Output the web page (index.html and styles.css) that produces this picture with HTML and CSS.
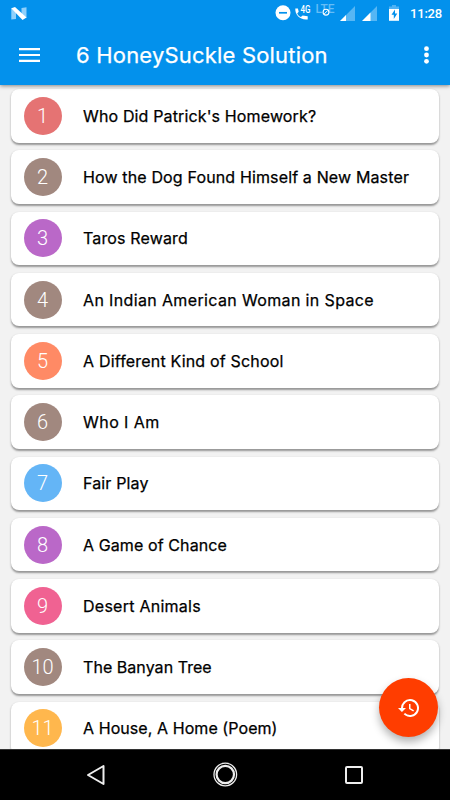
FILE: index.html
```html
<!DOCTYPE html>
<html lang="en">
<head>
  <meta charset="utf-8">
  <meta name="viewport" content="width=device-width">
  <title>6 HoneySuckle Solution</title>
  <link rel="stylesheet" href="styles.css">
</head>
<body>
  <header class="top">
    <div class="status">
      <svg class="logo" width="16" height="13" viewBox="0 0 16 13">
        <path d="M0.3 1L5 4.5V12L0.3 12.6zM10.5 1L15.5 0.3V11L10.5 8z" fill="#8fd0fb"/>
        <path d="M0.3 1.2L4 0L15.5 10.5L11.5 13z" fill="#fff"/>
      </svg>
      <svg class="icons" width="130" height="20" viewBox="275 3 130 20">
        <circle cx="283" cy="12.8" r="7.5" fill="#fff"/>
        <path d="M279 12.8h8" stroke="#0391ec" stroke-width="1.7"/>
        <path d="M295.3 8.5h2.6l.8 3.2-1.5 1.7c.9 1.7 2.1 2.8 3.7 3.6l1.7-1.6 5.1.8v3.2c-7.7.9-12.7-4.5-12.4-10.9z" fill="#fff"/>
        <text class="net" x="300.5" y="13" textLength="10" lengthAdjust="spacingAndGlyphs">4G</text>
        <text class="lte" x="315.5" y="13" textLength="19" lengthAdjust="spacingAndGlyphs">LTE</text>
        <circle cx="326" cy="12.2" r="2.9" fill="#0391ec" stroke="#fff" stroke-width="1.1"/>
        <path d="M324.2 14l3.6-3.6" stroke="#fff"/>
        <path d="M340 21L355 6V21zM362 21L377 6V21z" fill="#56b6f4"/>
        <path d="M340 21L346 15V21zM362 21L370.5 12.5V21z" fill="#fff"/>
        <path d="M389 6.5h3V5h4v1.5h3V9h-10z" fill="#4fb2f4"/>
        <path d="M389 9h10v11.8h-10z" fill="#fff"/>
        <path d="M395 9.5l-3.5 5.2h2.3v4.3l3.5-5.5h-2.3z" fill="#0391ec"/>
      </svg>
      <span class="time">11:28</span>
    </div>
    <div class="bar">
      <svg class="menu" width="21" height="14" viewBox="0 0 21 14">
        <path d="M0 1.1h21M0 7h21M0 12.9h21" stroke="#fff" stroke-width="2.1"/>
      </svg>
      <h1>6 HoneySuckle Solution</h1>
      <svg class="more" width="6" height="18" viewBox="0 0 6 18">
        <g fill="#fff"><circle cx="3.5" cy="2.7" r="2.4"/><circle cx="3.5" cy="9" r="2.4"/><circle cx="3.5" cy="15.3" r="2.4"/></g>
      </svg>
    </div>
  </header>

  <main class="list">
    <div class="card c1"><span class="num red">1</span><p>Who Did Patrick's Homework?</p></div>
    <div class="card c2"><span class="num brown">2</span><p>How the Dog Found Himself a New Master</p></div>
    <div class="card c3"><span class="num purple">3</span><p>Taros Reward</p></div>
    <div class="card c4"><span class="num brown">4</span><p>An Indian American Woman in Space</p></div>
    <div class="card c5"><span class="num orange">5</span><p>A Different Kind of School</p></div>
    <div class="card c6"><span class="num brown">6</span><p>Who I Am</p></div>
    <div class="card c7"><span class="num blue">7</span><p>Fair Play</p></div>
    <div class="card c8"><span class="num purple">8</span><p>A Game of Chance</p></div>
    <div class="card c9"><span class="num pink">9</span><p>Desert Animals</p></div>
    <div class="card c10"><span class="num brown">10</span><p>The Banyan Tree</p></div>
    <div class="card c11"><span class="num yellow">11</span><p>A House, A Home (Poem)</p></div>
  </main>

  <button class="fab" aria-label="History">
    <svg width="24" height="24" viewBox="0 0 24 24">
      <path fill="#fff" d="M13 3a9 9 0 0 0-9 9H1l3.89 3.89.07.14L9 12H6a7 7 0 1 1 2.06 4.94l-1.42 1.42A9 9 0 1 0 13 3zm-1 5v5l4.28 2.54.72-1.21-3.5-2.08V8z"/>
    </svg>
  </button>

  <nav class="nav">
    <svg width="20" height="22" viewBox="0 0 20 22"><path d="M2 11L17.5 2V20z" fill="none" stroke="#eee" stroke-width="2" stroke-linejoin="round"/></svg>
    <svg width="26" height="26" viewBox="0 0 26 26"><g fill="none" stroke="#eee"><circle cx="12.3" cy="12.5" r="11.3" stroke-width="1.3"/><circle cx="12.3" cy="12.5" r="8.7" stroke-width="2.2"/></g></svg>
    <svg width="18" height="18" viewBox="0 0 18 18"><rect x="1" y="1" width="16" height="16" rx="1" fill="none" stroke="#eee" stroke-width="2"/></svg>
  </nav>
</body>
</html>
```
FILE: styles.css
```css
* {
  box-sizing: border-box;
}
body {
  margin: 0;
  height: 800px;
  display: flex;
  flex-direction: column;
  overflow: hidden;
  position: relative;
  background: #f2f2f2;
  font-family: Inter, Roboto, sans-serif;
}
.top {
  flex: none;
  height: 85px;
  background: #0391ec;
  color: #fff;
  box-shadow: 0 1px 4px rgba(0,0,0,0.45);
  z-index: 1;
}
.status {
  display: flex;
  align-items: center;
  height: 26px;
  padding: 0 8px 0 11px;
}
.icons {
  margin-left: auto;
}
.net {
  font: 500 10px Roboto, sans-serif;
  fill: #fff;
}
.lte {
  font: 500 12px Roboto, sans-serif;
  fill: #65bdf6;
}
.time {
  width: 32px;
  margin-left: 5px;
  font: 500 13px Roboto, sans-serif;
  letter-spacing: -0.2px;
  white-space: nowrap;
}
.bar {
  display: flex;
  align-items: center;
  height: 58px;
  padding: 0 21px 0 19px;
}
h1 {
  flex: 1;
  margin: 0 0 0 36px;
  font-size: 22px;
  font-weight: 400;
  letter-spacing: 0.19px;
  -webkit-text-stroke: 0.25px #fff;
  white-space: nowrap;
}
.list {
  flex: 1;
  min-height: 0;
  overflow: hidden;
  padding: 4px 11px 0;
}
.card {
  display: flex;
  align-items: center;
  height: 53.5px;
  margin-bottom: 7.75px;
  padding-left: 12.5px;
  border-radius: 8px;
  background: #fff;
  box-shadow: 0 1.5px 2px rgba(0,0,0,0.38);
}
.card p {
  margin: 0 0 0 21.5px;
  font-size: 16px;
  font-weight: 400;
  letter-spacing: 0.14px;
  -webkit-text-stroke: 0.25px #000;
  color: #000;
  white-space: nowrap;
}
/* tracking per title */
.c4 p {letter-spacing: 0.36px}
.c5 p {letter-spacing: 0.18px}
.c6 p {letter-spacing: 0.45px}
.c8 p {letter-spacing: 0.1px}
.c9 p {letter-spacing: 0.25px}
.c10 p {letter-spacing: 0.05px}
.c11 p {letter-spacing: 0.07px}
.num {
  display: flex;
  align-items: center;
  justify-content: center;
  width: 38px;
  height: 38px;
  border-radius: 50%;
  font: 300 20px Roboto, sans-serif;
  color: #fff;
}
.red {background: #e57373}
.brown {background: #a1887f}
.purple {background: #ba68c8}
.orange {background: #ff8a65}
.blue {background: #64b5f6}
.pink {background: #f06292}
.yellow {background: #ffb74d}
.fab {
  position: absolute;
  left: 379px;
  top: 678px;
  width: 59px;
  height: 59px;
  padding: 0;
  display: flex;
  align-items: center;
  justify-content: center;
  border: none;
  border-radius: 50%;
  background: #ff3d00;
  box-shadow: 0 5px 8px rgba(0,0,0,0.3);
}
.nav {
  flex: none;
  display: flex;
  align-items: center;
  justify-content: space-between;
  height: 51px;
  padding: 0 87px 0 86px;
  border-top: 1px solid #333;
  background: #000;
  z-index: 1;
}
```
